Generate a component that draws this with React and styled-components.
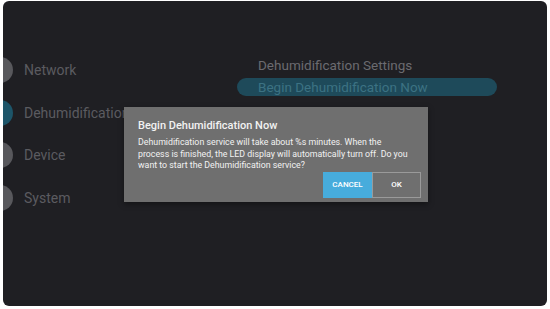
import React from 'react'
import styled, { createGlobalStyle } from 'styled-components'

const GlobalStyle = createGlobalStyle`
  html, body {
    margin: 0;
    padding: 0;
    background: #ffffff;
    font-family: Roboto, "Liberation Sans", sans-serif;
  }
`

const Screen = styled.div`
  position: relative;
  width: 544px;
  height: 305px;
  margin: 1px 3px 0 3px;
  background: #1f1f23;
  border-radius: 6px;
  overflow: hidden;
  display: flex;
`

const Menu = styled.div`
  width: 234px;
  padding-top: 55px;
  display: flex;
  flex-direction: column;
  gap: 14.5px;
`

const MenuItem = styled.div`
  display: flex;
  align-items: center;
  gap: 11px;
  height: 28px;
  color: #5b5b60;
  font-size: 14px;
  white-space: nowrap;
`

const Dot = styled.span`
  width: 26px;
  height: 26px;
  margin-left: -16px;
  border-radius: 50%;
  background: ${(p) => (p.$active ? '#1d5569' : '#58585c')};
  flex-shrink: 0;
`

const Settings = styled.div`
  padding-top: 55px;
  display: flex;
  flex-direction: column;
  gap: 4px;
  width: 260px;
`

const Option = styled.div`
  height: 18px;
  line-height: 18px;
  padding-left: 21px;
  border-radius: 9px;
  font-size: 13.5px;
  color: ${(p) => (p.$focused ? '#3c7283' : '#6b6b70')};
  background: ${(p) => (p.$focused ? '#1e4a5a' : 'transparent')};
`

const Dialog = styled.div`
  position: absolute;
  left: 121px;
  top: 106px;
  width: 304px;
  height: 95px;
  box-sizing: border-box;
  padding: 12px 7px 0 14px;
  background: #6f6f6f;
  box-shadow: 0 2px 6px rgba(0, 0, 0, 0.4);
  color: #f2f2f2;
`

const Title = styled.div`
  font-size: 11px;
  font-weight: 500;
  margin-bottom: 5px;
`

const Body = styled.div`
  font-size: 8.8px;
  line-height: 11.5px;
  width: 275px;
`

const Actions = styled.div`
  display: flex;
  justify-content: flex-end;
  margin-top: 0;
`

const Button = styled.div`
  width: 49px;
  height: 26px;
  box-sizing: border-box;
  display: flex;
  align-items: center;
  justify-content: center;
  font-size: 8px;
  font-weight: 500;
  color: #ffffff;
  background: ${(p) => (p.$primary ? '#47acdc' : 'transparent')};
  border: 1px solid ${(p) => (p.$primary ? '#47acdc' : '#9a9a9a')};
`

const menu = ['Network', 'Dehumidification', 'Device', 'System']

export default function App() {
  return (
    <>
      <GlobalStyle />
      <Screen>
        <Menu>
          {menu.map((label) => (
            <MenuItem key={label}>
              <Dot $active={label === 'Dehumidification'} />
              {label}
            </MenuItem>
          ))}
        </Menu>
        <Settings>
          <Option>Dehumidification Settings</Option>
          <Option $focused>Begin Dehumidification Now</Option>
        </Settings>
        <Dialog>
          <Title>Begin Dehumidification Now</Title>
          <Body>
            Dehumidification service will take about %s minutes. When the process is finished, the
            LED display will automatically turn off. Do you want to start the Dehumidification
            service?
          </Body>
          <Actions>
            <Button $primary>CANCEL</Button>
            <Button>OK</Button>
          </Actions>
        </Dialog>
      </Screen>
    </>
  )
}
